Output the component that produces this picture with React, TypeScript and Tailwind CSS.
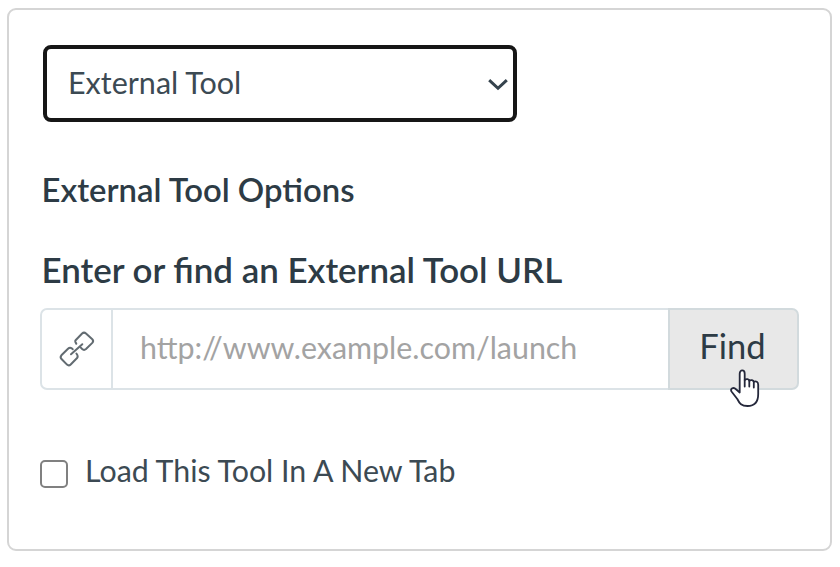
import React from "react";

function LinkIcon() {
  return (
    <svg width="38" height="38" viewBox="0 0 38 38" fill="none" stroke="#626b71" strokeWidth="2" strokeLinejoin="round" strokeLinecap="round">
      <path d="M18.3 13.8 L17.3 11.7 Q17 10.9 17.6 10.2 L24.1 3.5 Q26 1.8 28 3.5 L34.3 9.3 Q36 11 34.3 12.9 L28 19 Q26 20.7 24.2 19 L22.8 17.6" />
      <path d="M14.8 19.2 L13.7 18.3 Q11.8 17 10 18.8 L3.4 25.3 Q1.8 27.2 3.5 29 L9 34.6 Q10.8 36.3 12.7 34.5 L19.3 27.8 Q20.4 26.2 18.4 23.5" />
      <path d="M13 24.3 L24.3 14.2" />
    </svg>
  );
}

function HandCursor() {
  return (
    <svg className="absolute left-[60px] top-[59px]" width="31" height="40" viewBox="0 0 31 40" fill="white" stroke="#25283b" strokeWidth="1.8" strokeLinejoin="round" strokeLinecap="round">
      <path d="M9.7 23.5 V4.7 C9.7 0.3 14.7 0.3 14.7 4.7 V11 C16.5 9.5 18.8 10.2 19.3 11.7 C21 10.5 23.2 11.1 23.8 12.8 C26 11.7 28.2 13 28.2 15.8 V25 C28.2 32.5 24.5 37 17.5 37 C11.5 37 9.5 34.5 7.3 30 L1.5 22.5 C-0.3 19.5 3.7 17.8 6 20.3 Z" />
      <path d="M14.7 11 V17.5 M19.3 11.7 V17.5 M23.8 12.8 V18.5" fill="none" />
    </svg>
  );
}

export default function App() {
  return (
    <div className="h-[567px] w-[840px] bg-white pl-[7px] pt-2 font-['Lato',sans-serif] text-[#2d3b45]">
      <main className="h-[543px] w-[825px] rounded-[9px] border-2 border-[#d5d5d5] pl-[31px] pt-[35px]">
        <div className="ml-[3px] flex h-[77px] w-[474px] items-center justify-between rounded-[8px] border-4 border-[#161616] pl-[21px] pr-[4px]">
          <span className="mb-1 whitespace-nowrap text-[30.5px] leading-9 text-[#3c4a53]">External Tool</span>
          <svg width="22" height="16" viewBox="0 0 22 16" fill="none" stroke="#35434d" strokeWidth="3">
            <path d="M2.2 4.2 L11 12.3 L19.8 4.2" />
          </svg>
        </div>
        <h2 className="ml-[1.5px] mt-[48px] whitespace-nowrap text-[32.85px] font-semibold leading-10">External Tool Options</h2>
        <h2 className="ml-[1.5px] mt-[40px] whitespace-nowrap text-[34.9px] font-semibold leading-10">Enter or find an External Tool URL</h2>
        <div className="mt-[18px] flex h-[82px] w-[759px]">
          <div className="flex w-[73px] items-center justify-center rounded-l-[7px] border-2 border-[#dce3e7]">
            <LinkIcon />
          </div>
          <div className="flex flex-1 items-center border-y-2 border-[#dce3e7] pl-[27px] text-[#a3a3a3]">
            <span className="mb-1 whitespace-nowrap text-[30.4px] leading-9">http://www.example.com/launch</span>
          </div>
          <button className="relative w-[131px] rounded-r-[7px] border-2 border-[#d2dadd] bg-[#e8e8e8] pb-[6px] pr-[2px] text-[34.5px] leading-10">
            <span>Find</span>
            <HandCursor />
          </button>
        </div>
        <label className="mt-[61px] flex h-[38px] items-center">
          <span className="mt-[8px] h-7 w-7 rounded-[5px] border-2 border-[#808080]" />
          <span className="ml-[17px] whitespace-nowrap text-[30.35px] leading-9 text-[#3c4a53]">Load This Tool In A New Tab</span>
        </label>
      </main>
    </div>
  );
}
